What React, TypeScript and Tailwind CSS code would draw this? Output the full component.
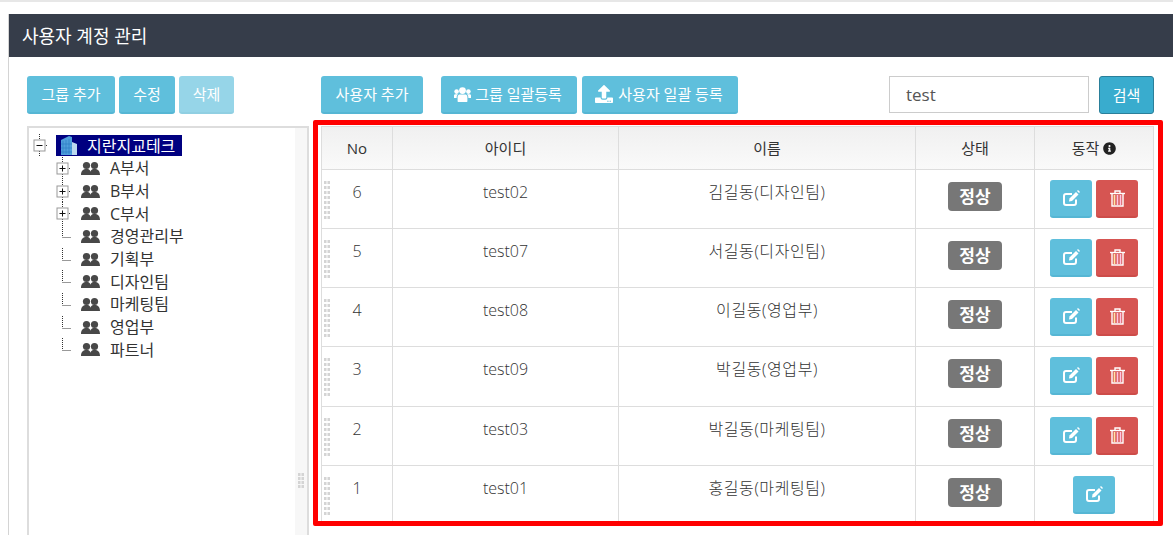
import { FaInfoCircle, FaUpload } from "react-icons/fa";

const groups = [
  { name: "A부서", expandable: true },
  { name: "B부서", expandable: true },
  { name: "C부서", expandable: true },
  { name: "경영관리부", expandable: false },
  { name: "기획부", expandable: false },
  { name: "디자인팀", expandable: false },
  { name: "마케팅팀", expandable: false },
  { name: "영업부", expandable: false },
  { name: "파트너", expandable: false },
];

const users = [
  { no: 6, id: "test02", name: "김길동(디자인팀)", canDelete: true },
  { no: 5, id: "test07", name: "서길동(디자인팀)", canDelete: true },
  { no: 4, id: "test08", name: "이길동(영업부)", canDelete: true },
  { no: 3, id: "test09", name: "박길동(영업부)", canDelete: true },
  { no: 2, id: "test03", name: "박길동(마케팅팀)", canDelete: true },
  { no: 1, id: "test01", name: "홍길동(마케팅팀)", canDelete: false },
];

function Grip({ rows, step = 5 }: { rows: number; step?: number }) {
  return (
    <svg width="6" height={rows * step} className="block">
      {Array.from({ length: rows }).map((_, i) => (
        <g key={i} fill="#d4d4d4">
          <rect x="0" y={i * step} width="2.5" height="3" />
          <rect x="3.5" y={i * step} width="2.5" height="3" />
        </g>
      ))}
    </svg>
  );
}

function Expander({ open }: { open?: boolean }) {
  return (
    <svg width="16" height="23" className="block shrink-0">
      <path d="M6.5 0V6M6.5 17V23M13 11.5H15" stroke="#333" strokeDasharray="1 1" fill="none" />
      <rect x="1" y="6" width="11" height="11" fill="#fff" stroke="#999" />
      <path d="M3.5 11.5H9.5" stroke="#111" />
      {!open && <path d="M6.5 8.5V14.5" stroke="#111" />}
    </svg>
  );
}

function Branch() {
  return (
    <svg width="16" height="23" className="block shrink-0">
      <path d="M6.5 0V12M6.5 12.5H15" stroke="#333" strokeDasharray="1 1" fill="none" />
    </svg>
  );
}

function Building() {
  return (
    <svg width="18" height="21" viewBox="0 0 18 21" className="block">
      <path d="M1 5 L9 1 L12 2 V20 H1Z" fill="#4f9fdc" />
      <path d="M3 6V19M6 5V19M9 4V19M1 9H12M1 13H12M1 17H12" stroke="#2f7fc4" strokeWidth="0.7" />
      <path d="M12 7 L17 9 V20 H12Z" fill="#bcd9ef" />
    </svg>
  );
}

// two busts used for the tree nodes
function Busts() {
  return (
    <svg width="19" height="15" viewBox="0 0 19 15" className="block shrink-0" fill="#484848">
      <circle cx="5.5" cy="4.5" r="3.6" />
      <circle cx="13.5" cy="4.5" r="3.6" />
      <path d="M0 14 C0 9.5 2.5 8.5 4 8 H7 C8.5 8.5 9.5 9.5 9.5 11 C9.5 9.5 10.5 8.5 12 8 H15 C16.5 8.5 19 9.5 19 14 Z" />
    </svg>
  );
}

function GroupIcon() {
  return (
    <svg width="17" height="15" viewBox="0 0 17 15" className="block shrink-0" fill="#fff">
      <circle cx="8.5" cy="3.6" r="3.4" />
      <circle cx="2.6" cy="4.6" r="2.3" />
      <circle cx="14.4" cy="4.6" r="2.3" />
      <path d="M3.6 14.2 V10 C3.6 8.2 5 7.6 6 7.6 H11 C12 7.6 13.4 8.2 13.4 10 V14.2 C13.4 14.8 13 15 12.4 15 H4.6 C4 15 3.6 14.8 3.6 14.2Z" />
      <path d="M0 11 V8.6 C0 7.6 .8 7.2 1.6 7.2 H4 C3 8 2.6 9 2.6 11Z" />
      <path d="M17 11 V8.6 C17 7.6 16.2 7.2 15.4 7.2 H13 C14 8 14.4 9 14.4 11Z" />
    </svg>
  );
}

function EditIcon() {
  return (
    <svg width="17" height="16" viewBox="0 0 17 16" className="block">
      <path d="M9 4 H3 Q1 4 1 6 V13 Q1 15 3 15 H11 Q13 15 13 13 V9.5" stroke="#fff" strokeWidth="2" fill="none" />
      <path d="M6 11.5 L6.5 8.5 L13 2 L15.5 4.5 L9 11 Z" fill="#fff" />
      <path d="M14 1 L15 0 L17 2 L16 3 Z" fill="#fff" />
    </svg>
  );
}

function TrashIcon() {
  return (
    <svg width="15" height="17" viewBox="0 0 15 17" className="block">
      <path d="M0 3.5 H15" stroke="#fff" strokeWidth="1.4" />
      <path d="M5 3 V1 H10 V3" stroke="#fff" strokeWidth="1.4" fill="none" />
      <path d="M2 4 V16 H13 V4" stroke="#fff" strokeWidth="1.4" fill="none" />
      <path d="M4.5 5 V15" stroke="#ffe6a8" strokeWidth="1.6" />
      <path d="M7.5 5 V15 M10.5 5 V15" stroke="#ffc4e0" strokeWidth="1.6" />
    </svg>
  );
}

function ActionButton({ label, className = "" }: { label: React.ReactNode; className?: string }) {
  return (
    <button
      className={`h-[38px] flex items-center justify-center rounded-[3px] bg-[#5fbfdc] border-b-2 border-[#55b6d4] text-white text-[15px] ${className}`}
    >
      {label}
    </button>
  );
}

export default function App() {
  return (
    <div className="h-[535px] overflow-hidden bg-white text-[#333] font-['Open_Sans','Noto_Sans_CJK_KR',sans-serif]">
      <div className="h-[2px] bg-[#e7e7e7]" />
      <div className="mt-3 ml-2 border-l border-[#d4d4d4] h-[521px]">
        <div className="h-[43px] flex items-center pl-[13px] pt-[2px] bg-[#363d4a] text-white text-[18px]">
          사용자 계정 관리
        </div>

        <div className="flex pl-[18px] pt-[19px] gap-3">
          {/* Tree */}
          <div className="w-[282px] shrink-0">
            <div className="flex gap-1">
              <ActionButton label="그룹 추가" className="w-[88px]" />
              <ActionButton label="수정" className="w-[56px]" />
              <ActionButton label="삭제" className="w-[55px] opacity-65" />
            </div>
            <div className="relative mt-3 h-[420px] border-2 border-[#ddd] pl-[4px] pt-[7px]">
              <div className="absolute top-0 bottom-0 right-0 w-3 bg-[#f7f7f7] flex items-center justify-center pt-[289px]">
                <Grip rows={4} step={4} />
              </div>
              <div className="flex items-center h-[21px]">
                <Expander open />
                <div className="ml-[7px] h-[21px] w-[126px] bg-[#000080] flex items-center text-white text-base pl-1">
                  <Building />
                  <span className="ml-[9px]">지란지교테크</span>
                </div>
              </div>
              <ul className="pl-[23px] pt-px">
                {groups.map((g) => (
                  <li key={g.name} className="flex items-center h-[22.7px] text-base">
                    {g.expandable ? <Expander /> : <Branch />}
                    <span className="ml-[9px]">
                      <Busts />
                    </span>
                    <span className="ml-[10px]">{g.name}</span>
                  </li>
                ))}
              </ul>
            </div>
          </div>

          {/* Users */}
          <div className="w-[833px] shrink-0">
            <div className="flex">
              <ActionButton label="사용자 추가" className="w-[102px]" />
              <ActionButton
                label={
                  <>
                    <GroupIcon />
                    <span className="ml-[4px]">그룹 일괄등록</span>
                  </>
                }
                className="w-[136px] ml-[18px] pr-[2px]"
              />
              <ActionButton
                label={
                  <>
                    <FaUpload className="mr-[5px] text-[18px] -ml-[2px]" />사용자 일괄 등록
                  </>
                }
                className="w-[156px] ml-[5px]"
              />
              <input
                readOnly
                value="test"
                className="ml-[151px] w-[200px] h-[37px] border border-[#ccc] pl-4 text-[17px] text-[#555] outline-none"
              />
              <button className="ml-[10px] w-[55px] h-[38px] rounded-[3px] bg-[#39acce] border border-[#2a7f9a] text-white text-[15px]">
                검색
              </button>
            </div>

            <div className="relative mt-3">
              <table className="w-full table-fixed border-collapse text-base font-light">
                <colgroup>
                  <col className="w-[71px]" />
                  <col className="w-[226px]" />
                  <col className="w-[297px]" />
                  <col className="w-[119px]" />
                  <col className="w-[119px]" />
                </colgroup>
                <thead>
                  <tr className="h-[43px] bg-linear-to-b from-[#f0f0f0] to-[#fafafa] text-[15px]">
                    <th className="border border-[#ddd] font-medium">No</th>
                    <th className="border border-[#ddd] font-normal">아이디</th>
                    <th className="border border-[#ddd] font-normal">이름</th>
                    <th className="border border-[#ddd] font-normal">상태</th>
                    <th className="border border-[#ddd] font-normal">
                      <span className="inline-flex items-center gap-1">
                        동작 <FaInfoCircle className="text-[13px] text-[#222]" />
                      </span>
                    </th>
                  </tr>
                </thead>
                <tbody>
                  {users.map((u) => (
                    <tr key={u.no} className={u.no === 3 ? "h-[60px]" : "h-[59px]"}>
                      <td className="relative border border-[#ddd] align-top text-center pt-[10px]">
                        <span className="absolute left-[2px] top-[11px]">
                          <Grip rows={8} />
                        </span>
                        {u.no}
                      </td>
                      <td className="border border-[#ddd] align-top text-center pt-[10px]">{u.id}</td>
                      <td className="border border-[#ddd] align-top text-center pt-[10px] tracking-[0.6px]">
                        {u.name}
                      </td>
                      <td className="border border-[#ddd] align-top text-center pt-3">
                        <span className="inline-flex items-center justify-center w-[54px] h-[29px] rounded-[4px] bg-[#777] text-white text-[17px] font-bold">
                          정상
                        </span>
                      </td>
                      <td className="border border-[#ddd] align-top pt-[10px]">
                        <div className="flex justify-center gap-1">
                          <ActionButton label={<EditIcon />} className="w-[42px]" />
                          {u.canDelete && (
                            <button className="w-[42px] h-[38px] flex items-center justify-center rounded-[3px] bg-[#d65552] border-b-2 border-[#cd4c49]">
                              <TrashIcon />
                            </button>
                          )}
                        </div>
                      </td>
                    </tr>
                  ))}
                </tbody>
              </table>
              {/* red annotation frame */}
              <div className="absolute pointer-events-none left-[-8px] right-[-9px] top-[-6px] h-[406px] border-[5px] border-[#f00] rounded-[2px]" />
            </div>
          </div>
        </div>
      </div>
    </div>
  );
}
